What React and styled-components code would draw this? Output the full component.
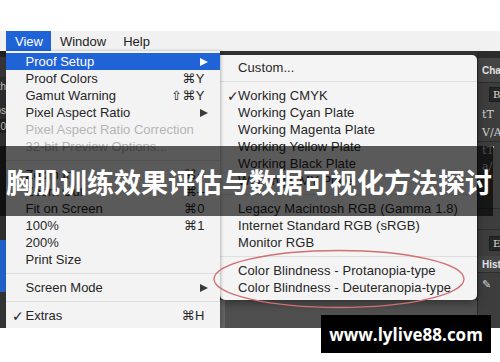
import React from 'react'
import styled, { createGlobalStyle } from 'styled-components'

const GlobalStyle = createGlobalStyle`
  html, body {
    margin: 0;
    padding: 0;
    background: #fff;
  }
  body {
    width: 500px;
    height: 362px;
    overflow: hidden;
    font-family: 'Liberation Sans', Arial, 'DejaVu Sans', sans-serif;
  }
`

const Page = styled.div`
  position: relative;
  width: 500px;
  height: 362px;
  padding-top: 31px;
  box-sizing: border-box;
  background: #fff;
`

const Shot = styled.div`
  height: 297px;
  display: flex;
  flex-direction: column;
  overflow: hidden;
  background: #3b3b3b;
`

const MenuBar = styled.div`
  height: 20px;
  flex: none;
  display: flex;
  padding-left: 6px;
  background: #f1f1f1;
  font-size: 13px;
  color: #222;
`

const BarItem = styled.div`
  display: flex;
  align-items: center;
  padding: 0 8px 0 9px;
  background: ${p => (p.$active ? '#1f63d6' : 'transparent')};
  color: ${p => (p.$active ? '#fff' : '#222')};
`

const Workspace = styled.div`
  flex: 1;
  display: flex;
  min-height: 0;
`

const LeftStrip = styled.div`
  width: 6px;
  flex: none;
  display: flex;
  flex-direction: column;
  background: #2c2c2c;
  overflow: hidden;
`

const StripBit = styled.div`
  height: ${p => p.$h}px;
  flex: none;
  display: flex;
  align-items: center;
  justify-content: flex-end;
  white-space: nowrap;
  font-size: 10px;
  color: #bdbdbd;
  background: ${p => p.$bg || 'transparent'};
`

const MainMenu = styled.div`
  width: 214px;
  flex: none;
  padding-top: 2px;
  background: #f3f3f3;
  position: relative;
  z-index: 2;
  box-shadow: 1px 0 3px rgba(0, 0, 0, 0.25);
`

const Item = styled.div`
  height: 17px;
  display: grid;
  grid-template-columns: 13.5px 1fr auto;
  align-items: center;
  padding: 0 ${p => (p.$arrow ? 12 : 15)}px 0 6px;
  font-size: 13px;
  white-space: nowrap;
  background: ${p => (p.$active ? '#1f63d6' : 'transparent')};
  color: ${p => (p.$active ? '#fff' : p.$off ? '#b5b5b5' : '#262626')};
`

const SubItem = styled(Item)`
  grid-template-columns: 11px 1fr auto;
  padding: 0 12px 0 7px;
  letter-spacing: 0.1px;
`

const Check = styled.span`
  font-family: 'DejaVu Sans', sans-serif;
  font-size: 14px;
  font-weight: bold;
  line-height: 1;
`

const Keys = styled.span`
  font-family: 'Liberation Sans', 'DejaVu Sans', sans-serif;
  letter-spacing: 0.5px;
`

const Arrow = styled.span`
  width: 0;
  height: 0;
  border-top: 4.5px solid transparent;
  border-bottom: 4.5px solid transparent;
  border-left: 8px solid ${p => (p.$light ? '#fff' : '#3a3a3a')};
`

const Sep = styled.div`
  height: 11px;
  display: flex;
  align-items: center;
  &::after {
    content: '';
    flex: 1;
    height: 1px;
    background: #dedede;
  }
`

const Middle = styled.div`
  flex: 1;
  display: flex;
  flex-direction: column;
  padding-top: 4px;
  background: #333;
`

const SubMenu = styled.div`
  flex: none;
  width: 257px;
  padding: 4px 0;
  background: #f4f4f4;
  border-radius: 0 5px 5px 5px;
  box-shadow: 0 3px 8px rgba(0, 0, 0, 0.4);
  position: relative;
  z-index: 1;
`

const Below = styled.div`
  flex: 1;
  background: #4f4f4f;
  border-left: 5px solid #626262;
`

const Panel = styled.div`
  width: 22px;
  flex: none;
  display: flex;
  flex-direction: column;
  background: #3d3d3d;
  border-left: 1px solid #2a2a2a;
  overflow: hidden;
`

const PanelHead = styled.div`
  height: ${p => p.$h || 22}px;
  flex: none;
  display: flex;
  align-items: center;
  padding-left: 4px;
  white-space: nowrap;
  font-size: 10px;
  font-weight: bold;
  color: #e2e2e2;
  background: ${p => p.$bg || '#454545'};
  border-bottom: 1px solid #2c2c2c;
`

const PanelRow = styled.div`
  height: ${p => p.$h}px;
  flex: none;
  display: flex;
  align-items: center;
  padding-left: ${p => p.$pad || 4}px;
  white-space: nowrap;
  font-family: 'DejaVu Serif', serif;
  font-size: 11px;
  color: #cfcfcf;
  border-bottom: ${p => (p.$line ? '1px solid #2d2d2d' : 'none')};
`

const FieldBox = styled.div`
  height: 13px;
  margin-left: 7px;
  padding-left: 3px;
  display: flex;
  align-items: center;
  font-size: 10px;
  color: #dcdcdc;
  background: #262626;
  border: 1px solid #1c1c1c;
  white-space: nowrap;
`

const Banner = styled.div`
  position: absolute;
  left: 0;
  top: 146px;
  width: 493px;
  height: 70px;
  display: flex;
  align-items: center;
  padding-left: 6px;
  box-sizing: border-box;
  background: rgba(0, 0, 0, 0.63);
  color: #fff;
  font-family: 'Noto Sans CJK SC', 'Noto Sans', sans-serif;
  font-weight: 700;
  font-size: 27px;
  white-space: nowrap;
  z-index: 5;
`

const Ring = styled.svg`
  position: absolute;
  left: 208px;
  top: 246px;
  z-index: 4;
  overflow: visible;
`

const Stamp = styled.div`
  position: absolute;
  left: 321px;
  top: 315px;
  width: 170px;
  height: 38px;
  display: flex;
  align-items: center;
  justify-content: center;
  background: #000;
  color: #fff;
  font-family: 'Open Sans', 'DejaVu Sans', sans-serif;
  font-weight: 700;
  font-size: 17px;
  z-index: 6;
`

const mainItems = [
  { label: 'Proof Setup', arrow: true, active: true },
  { label: 'Proof Colors', keys: '⌘Y' },
  { label: 'Gamut Warning', keys: '⇧⌘Y' },
  { label: 'Pixel Aspect Ratio', arrow: true },
  { label: 'Pixel Aspect Ratio Correction', off: true },
  { label: '32-bit Preview Options...', off: true },
  { sep: true },
  { label: 'Zoom In', keys: '⌘+' },
  { label: 'Zoom Out', keys: '⌘–' },
  { label: 'Fit on Screen', keys: '⌘0' },
  { label: '100%', keys: '⌘1' },
  { label: '200%' },
  { label: 'Print Size' },
  { sep: true },
  { label: 'Screen Mode', arrow: true },
  { sep: true },
  { label: 'Extras', keys: '⌘H', check: true },
  { label: 'Show', arrow: true },
]

const subItems = [
  { label: 'Custom...' },
  { sep: true },
  { label: 'Working CMYK', check: true },
  { label: 'Working Cyan Plate' },
  { label: 'Working Magenta Plate' },
  { label: 'Working Yellow Plate' },
  { label: 'Working Black Plate' },
  { label: 'Working CMY Plate' },
  { sep: true },
  { label: 'Legacy Macintosh RGB (Gamma 1.8)' },
  { label: 'Internet Standard RGB (sRGB)' },
  { label: 'Monitor RGB' },
  { sep: true },
  { label: 'Color Blindness - Protanopia-type' },
  { label: 'Color Blindness - Deuteranopia-type' },
]

export default function App() {
  return (
    <Page>
      <GlobalStyle />
      <Shot>
        <MenuBar>
          <BarItem $active>View</BarItem>
          <BarItem>Window</BarItem>
          <BarItem>Help</BarItem>
        </MenuBar>

        <Workspace>
          <LeftStrip>
            <StripBit $h={6} $bg="#222" />
            <StripBit $h={20} $bg="#353535" />
            <StripBit $h={18}>Width</StripBit>
            <StripBit $h={6} />
            <StripBit $h={18}>Pos</StripBit>
            <StripBit $h={14} $bg="#1f1f1f">0</StripBit>
            <StripBit $h={107} $bg="#2e2e2e" />
            <StripBit $h={52} $bg="#2160c8" />
            <StripBit $h={60} $bg="#333" />
          </LeftStrip>

          <MainMenu>
            {mainItems.map((it, i) =>
              it.sep ? (
                <Sep key={i} />
              ) : (
                <Item key={i} $active={it.active} $off={it.off} $arrow={it.arrow}>
                  <Check>{it.check ? '✓' : ''}</Check>
                  <span>{it.label}</span>
                  {it.arrow ? <Arrow $light={it.active} /> : <Keys>{it.keys}</Keys>}
                </Item>
              )
            )}
          </MainMenu>

          <Middle>
            <SubMenu>
              {subItems.map((it, i) =>
                it.sep ? (
                  <Sep key={i} />
                ) : (
                  <SubItem key={i}>
                    <Check>{it.check ? '✓' : ''}</Check>
                    <span>{it.label}</span>
                  </SubItem>
                )
              )}
            </SubMenu>
            <Below />
          </Middle>

          <Panel>
            <PanelHead $h={6} $bg="#2b2b2b" />
            <PanelHead $h={24}>Character</PanelHead>
            <PanelRow $h={22} $pad={0}>
              <FieldBox>Basic</FieldBox>
            </PanelRow>
            <PanelRow $h={18}>tT</PanelRow>
            <PanelRow $h={18} $line>V/A</PanelRow>
            <PanelRow $h={16}>tT</PanelRow>
            <PanelRow $h={16}>a/</PanelRow>
            <PanelRow $h={34} $line />
            <PanelRow $h={20} $line />
            <PanelRow $h={26} $pad={0}>
              <FieldBox>E</FieldBox>
            </PanelRow>
            <PanelHead $h={16}>Histo</PanelHead>
            <PanelRow $h={22}>✎</PanelRow>
            <PanelRow $h={40} />
          </Panel>
        </Workspace>
      </Shot>

      <Banner>胸肌训练效果评估与数据可视化方法探讨</Banner>

      <Ring width="262" height="66">
        <ellipse
          cx="131"
          cy="33"
          rx="125"
          ry="28.5"
          fill="none"
          stroke="#d26f70"
          strokeWidth="1.3"
        />
      </Ring>

      <Stamp>www.lylive88.com</Stamp>
    </Page>
  )
}
